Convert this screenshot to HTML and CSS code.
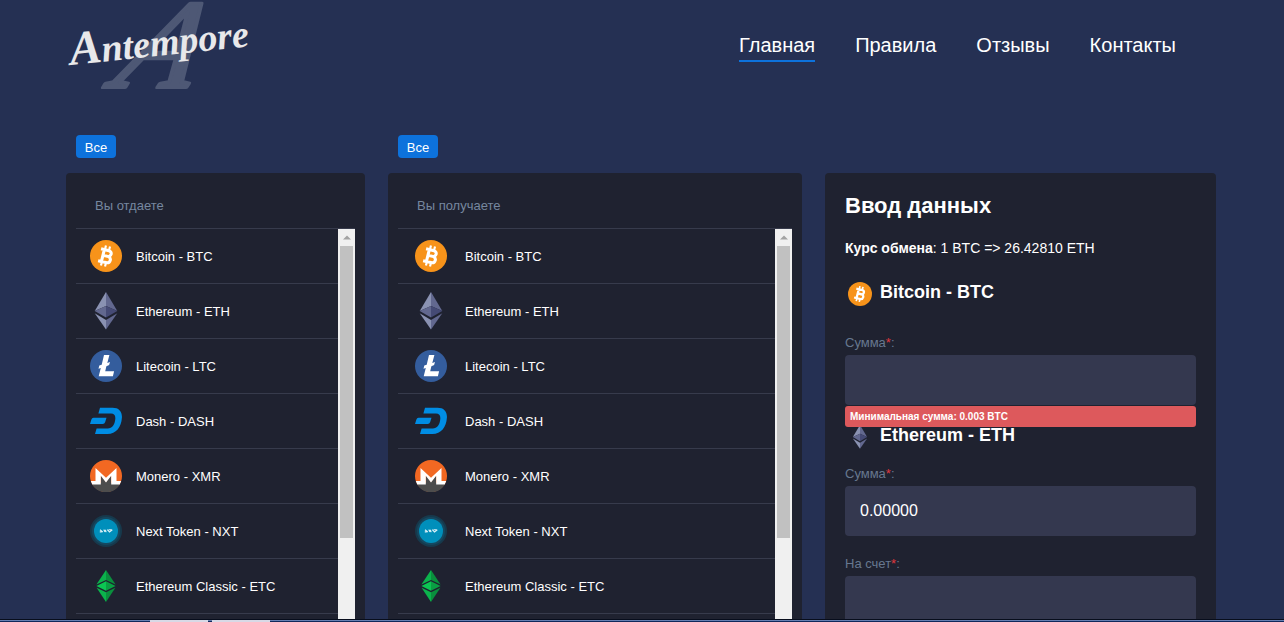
FILE: index.html
```html
<!DOCTYPE html>
<html lang="ru">
<head>
<meta charset="utf-8">
<title>Antempore</title>
<link rel="stylesheet" href="styles.css">
</head>
<body>
<svg class="sprite" aria-hidden="true">
  <symbol id="btc" viewBox="0 0 32 32">
    <circle cx="16" cy="16" r="16" fill="#f7931a"/>
    <g transform="rotate(14 16 16) translate(-1.600 -2.100) scale(1.130)" fill="none" stroke="#fff">
      <path d="M12.800 10v12M9.800 10.800H17a2.600 2.600 0 0 1 0 5.200h-4M13 16h4.800a2.900 2.900 0 0 1 0 5.700H9.800" stroke-width="2.700"/>
      <path d="M13.300 7v3.500M17 7v3.500M13.300 22v3.300M17 22v3.300" stroke-width="1.900"/>
    </g>
  </symbol>
  <symbol id="eth" viewBox="0 0 32 38">
    <path d="M16 0 4.700 19 16 14z" fill="#8a92b2"/>
    <path d="M16 0 27.300 19 16 14z" fill="#62688f"/>
    <path d="M4.700 19 16 14v11.600z" fill="#62688f"/>
    <path d="M27.300 19 16 14v11.600z" fill="#454a75"/>
    <path d="M4.700 21.200 16 28v9.500z" fill="#8a92b2"/>
    <path d="M27.300 21.200 16 28v9.500z" fill="#62688f"/>
  </symbol>
  <symbol id="ltc" viewBox="0 0 32 32">
    <circle cx="16" cy="16" r="16" fill="#345d9d"/>
    <path d="M14 5h5.400l-2.100 8 2.700-1.100-.9 3.200-2.700 1.100-1.200 5h8.900l-1.200 5H8.700l2.100-8.300-2.300.9.800-3.200 2.400-.9z" fill="#fff"/>
  </symbol>
  <symbol id="dash" viewBox="0 0 32 32">
    <path d="M10 2.800h12.500c6.500 0 9.900 3.900 9.400 10-.6 9.500-5.800 16.200-14.400 16.200H5l1.600-5.600h11.200c4.300 0 7-3.500 7.500-9.400.3-3.600-1.100-5.500-4.300-5.500H8.400z" fill="#008de4"/>
    <path d="M3.500 12.800h13l-1.300 4.200q-.6 2-2.500 2H0l1.300-4.200q.6-2 2.200-2z" fill="#008de4"/>
  </symbol>
  <symbol id="xmr" viewBox="0 0 32 32">
    <circle cx="16" cy="16" r="16" fill="#f26822"/>
    <path d="M1.500 23h29A16 16 0 0 1 1.500 23z" fill="#4d4d4d"/>
    <path d="M11 15.500v9h10v-9l-5 6.500z" fill="#4d4d4d"/>
    <path d="M.8 21h4.700V8L16 17.800 26.500 8v13h4.700l-1.500 3.500h-8.500v-8.700L16 22.500l-5.200-6.700v8.700H2.300z" fill="#fff"/>
  </symbol>
  <symbol id="nxt" viewBox="0 0 32 32">
    <circle cx="16" cy="16" r="16" fill="#17394c"/>
    <circle cx="16" cy="16" r="14" fill="#154860"/>
    <circle cx="16" cy="16" r="12" fill="#008fbb"/>
    <path d="M10 14.700l2.800 2.300M13.600 14.700l2.800 2.300M17.200 14.700l2.300 2.300 2.800-2.300M9.800 16.900h2M14.200 16.900l1.800-2M18.500 14.800h3" fill="none" stroke="#d9f0f7" stroke-width="1.100"/>
  </symbol>
  <symbol id="etc" viewBox="0 0 32 32">
    <path d="M16 0 6.400 14.600 16 10z" fill="#0bb34c"/>
    <path d="M16 0 25.600 14.600 16 10z" fill="#0a8f3d"/>
    <path d="M6.400 16 16 11.300v9.500z" fill="#0cc653"/>
    <path d="M25.600 16 16 11.300v9.500z" fill="#0a9f43"/>
    <path d="M6.600 17.800 16 22.200V32z" fill="#0bb34c"/>
    <path d="M25.400 17.800 16 22.200V32z" fill="#0a8f3d"/>
  </symbol>
  <symbol id="up" viewBox="0 0 8 4"><path d="M0 4 4 0l4 4z" fill="#a3a3a3"/></symbol>
</svg>

<div class="page">
  <header class="header">
    <a class="logo" href="#" aria-label="Antempore">
      <svg class="logo-art" viewBox="0 0 190 96">
        <text class="logo-mark" transform="translate(44 87) skewX(-24)">A</text>
        <text class="logo-name" transform="translate(5 65) rotate(-6)"><tspan class="logo-cap">A</tspan>ntempore</text>
      </svg>
    </a>
    <nav class="nav">
      <a class="nav-link active" href="#">Главная</a>
      <a class="nav-link" href="#">Правила</a>
      <a class="nav-link" href="#">Отзывы</a>
      <a class="nav-link" href="#">Контакты</a>
    </nav>
  </header>

  <main class="columns">
    <section class="column">
      <button class="filter" type="button">Все</button>
      <div class="card">
        <h2 class="card-title">Вы отдаете</h2>
        <div class="scroll">
          <ul class="coins">
            <li class="coin"><svg class="coin-icon"><use href="#btc"/></svg>Bitcoin - BTC</li>
            <li class="coin"><svg class="coin-icon tall"><use href="#eth"/></svg>Ethereum - ETH</li>
            <li class="coin"><svg class="coin-icon"><use href="#ltc"/></svg>Litecoin - LTC</li>
            <li class="coin"><svg class="coin-icon"><use href="#dash"/></svg>Dash - DASH</li>
            <li class="coin"><svg class="coin-icon"><use href="#xmr"/></svg>Monero - XMR</li>
            <li class="coin"><svg class="coin-icon"><use href="#nxt"/></svg>Next Token - NXT</li>
            <li class="coin"><svg class="coin-icon"><use href="#etc"/></svg>Ethereum Classic - ETC</li>
          </ul>
          <div class="bar"><svg class="bar-up"><use href="#up"/></svg><div class="thumb"></div></div>
        </div>
      </div>
    </section>

    <section class="column">
      <button class="filter" type="button">Все</button>
      <div class="card">
        <h2 class="card-title">Вы получаете</h2>
        <div class="scroll">
          <ul class="coins wide">
            <li class="coin"><svg class="coin-icon"><use href="#btc"/></svg>Bitcoin - BTC</li>
            <li class="coin"><svg class="coin-icon tall"><use href="#eth"/></svg>Ethereum - ETH</li>
            <li class="coin"><svg class="coin-icon"><use href="#ltc"/></svg>Litecoin - LTC</li>
            <li class="coin"><svg class="coin-icon"><use href="#dash"/></svg>Dash - DASH</li>
            <li class="coin"><svg class="coin-icon"><use href="#xmr"/></svg>Monero - XMR</li>
            <li class="coin"><svg class="coin-icon"><use href="#nxt"/></svg>Next Token - NXT</li>
            <li class="coin"><svg class="coin-icon"><use href="#etc"/></svg>Ethereum Classic - ETC</li>
          </ul>
          <div class="bar"><svg class="bar-up"><use href="#up"/></svg><div class="thumb"></div></div>
        </div>
      </div>
    </section>

    <section class="column form-column">
      <form class="card form">
        <h1 class="form-title">Ввод данных</h1>
        <p class="rate"><b>Курс обмена</b>: 1 BTC =&gt; 26.42810 ETH</p>
        <h3 class="pair first"><svg class="pair-icon"><use href="#btc"/></svg>Bitcoin - BTC</h3>
        <div class="field">
          <label class="label" for="give">Сумма<span class="req">*</span>:</label>
          <input class="input" id="give" type="text">
          <div class="error">Минимальная сумма: 0.003 BTC</div>
        </div>
        <h3 class="pair"><svg class="pair-icon"><use href="#eth"/></svg>Ethereum - ETH</h3>
        <div class="field">
          <label class="label" for="get">Сумма<span class="req">*</span>:</label>
          <input class="input" id="get" type="text" value="0.00000">
        </div>
        <div class="field">
          <label class="label" for="account">На счет<span class="req">*</span>:</label>
          <input class="input" id="account" type="text">
        </div>
      </form>
    </section>
  </main>
</div>
<footer class="taskbar"><span class="task"></span><span class="task"></span></footer>
</body>
</html>
```

FILE: styles.css
```css
* { box-sizing: border-box; }
body {
  margin: 0;
  height: 100vh;
  display: flex;
  flex-direction: column;
  overflow: hidden;
  background: #253053;
  color: #fff;
  font-family: "Liberation Sans", Arial, sans-serif;
  font-size: 13px;
}
h1, h2, h3, p, ul { margin: 0; padding: 0; }
.sprite { display: none; }

.page {
  flex: 1;
  min-height: 0;
  display: flex;
  flex-direction: column;
  padding: 0 68px 0 66px;
}

.header {
  flex: none;
  display: flex;
  justify-content: space-between;
  align-items: flex-start;
  height: 135px;
}
.logo-art { display: block; width: 190px; height: 96px; overflow: visible; }
.logo-name {
  font: italic bold 38px "Liberation Serif", serif;
  fill: #e8e8ea;
}
.logo-cap { font-size: 48px; }
.logo-mark {
  font: italic 126px "Liberation Serif", serif;
  fill: #4e5875;
  stroke: #4e5875;
  stroke-width: 4px;
  stroke-linejoin: round;
}
.nav { display: flex; gap: 40px; padding: 32px 40px 0 0; }
.nav-link {
  padding-bottom: 2px;
  border-bottom: 2px solid transparent;
  color: #fff;
  font-size: 20px;
  line-height: 26px;
  text-decoration: none;
}
.nav-link.active { border-color: #0d72dc; }

.columns {
  flex: 1;
  min-height: 0;
  display: grid;
  grid-template-columns: 299fr 414fr 391fr;
  gap: 23px;
}
.column {
  display: flex;
  flex-direction: column;
  align-items: flex-start;
  gap: 15px;
  min-height: 0;
}
.form-column { padding-top: 38px; }
.filter {
  flex: none;
  margin-left: 10px;
  padding: 1px 8px 0;
  width: 40px;
  height: 23px;
  border: 0;
  border-radius: 4px;
  background: #0d72dc;
  color: #fff;
  font: 13px "Liberation Sans", Arial, sans-serif;
}

.card {
  flex: 1;
  width: 100%;
  min-height: 0;
  display: flex;
  flex-direction: column;
  padding: 0 10px;
  border-radius: 4px 4px 0 0;
  background: #1f2230;
  overflow: hidden;
}
.card-title {
  flex: none;
  height: 56px;
  padding: 10px 19px 0;
  border-bottom: 1px solid #373b4c;
  color: #76879f;
  font-size: 13px;
  font-weight: normal;
  line-height: 45px;
}
.scroll { flex: 1; min-height: 0; display: flex; }
.coins { flex: 1; overflow: hidden; list-style: none; }
.coin {
  display: flex;
  align-items: center;
  gap: 14px;
  height: 55px;
  padding-left: 14px;
  border-bottom: 1px solid #373b4c;
}
.wide .coin { gap: 18px; padding-left: 17px; }
.coin-icon { width: 32px; height: 32px; }
.coin-icon.tall { height: 38px; }
.bar {
  flex: none;
  width: 17px;
  padding: 0 2px;
  background: #f0f0f0;
}
.bar-up { display: block; width: 8px; height: 17px; margin: 0 auto; }
.thumb { height: 292px; background: #c1c1c1; }

.form { padding: 20px 20px 0; }
.form > * { flex: none; }
.form-title { font-size: 22px; line-height: 26px; }
.rate { margin-top: 19px; font-size: 14px; line-height: 20px; }
.pair {
  display: flex;
  gap: 8px;
  margin: 1px 0 14px;
  padding-left: 3px;
  font-size: 18px;
  line-height: 24px;
}
.pair.first { margin: 22px 0 26px; }
.pair-icon { width: 24px; height: 24px; margin-top: 2px; }
.field { position: relative; margin-bottom: 17px; }
.label {
  display: block;
  margin-bottom: 1px;
  color: #67788f;
  font-size: 13px;
  line-height: 22px;
}
.req { color: #e0383e; }
.input {
  display: block;
  width: 100%;
  height: 50px;
  padding: 0 15px;
  border: 0;
  border-radius: 4px;
  background: #34384f;
  color: #fff;
  font: 16px "Liberation Sans", Arial, sans-serif;
}
.error {
  position: absolute;
  z-index: 1;
  top: calc(100% + 1px);
  left: 0;
  right: 0;
  padding: 0 5px;
  border-radius: 3px;
  background: #dd595c;
  font-size: 10px;
  font-weight: bold;
  line-height: 21px;
}

.taskbar {
  flex: none;
  display: flex;
  gap: 4px;
  height: 3px;
  padding: 1px 0 0 150px;
  background: linear-gradient(#070d1c 0 1px, #6680b3 1px 2px, #10295c 2px);
}
.task { width: 58px; background: #d7d9e6; }
```
